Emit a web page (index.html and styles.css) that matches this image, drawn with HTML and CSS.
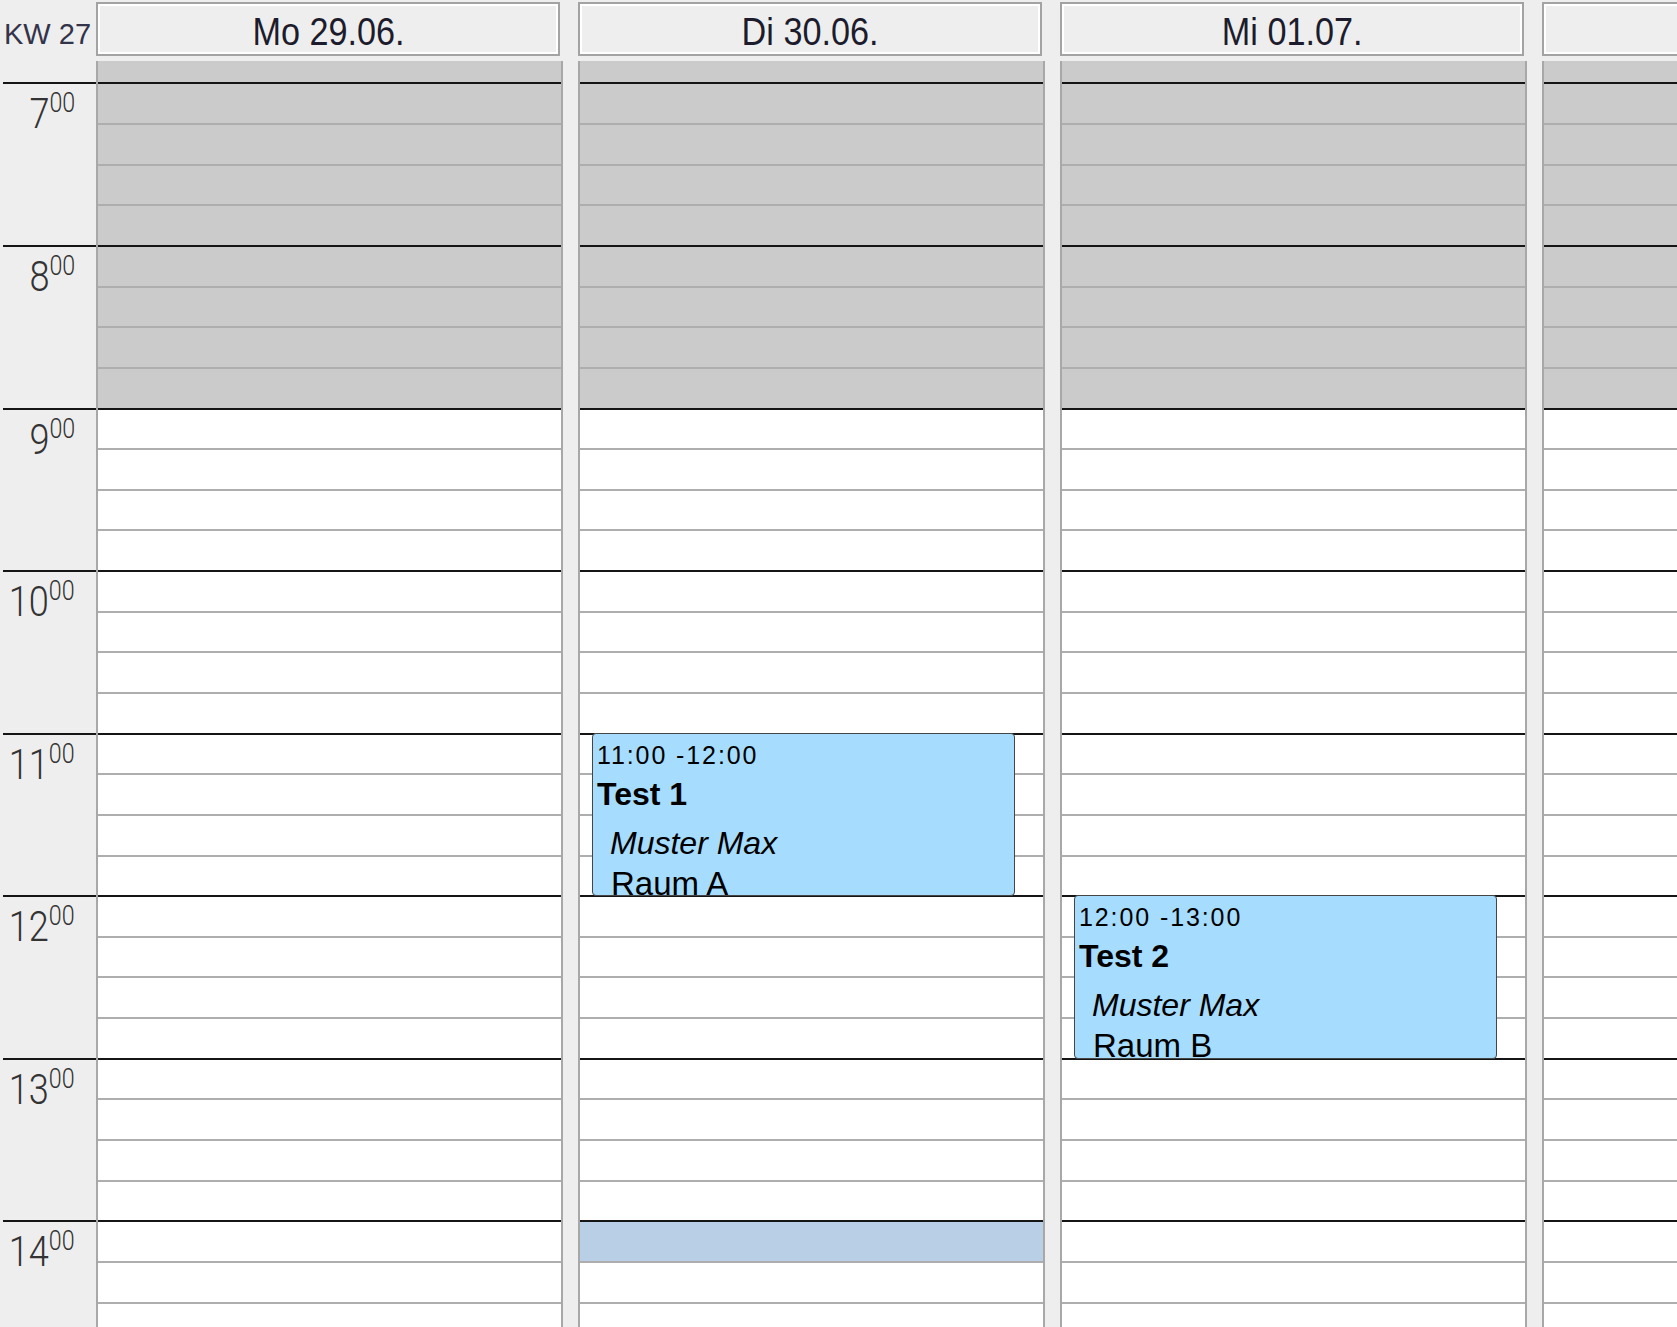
FILE: index.html
```html
<!DOCTYPE html>
<html lang="de">
<head>
<meta charset="utf-8">
<title>Kalender KW 27</title>
<link rel="stylesheet" href="styles.css">
</head>
<body>
<div class="cal">
  <div class="timecol">
    <div class="corner">KW 27</div>
    <div class="tpre"></div>
    <div class="thour"><span class="lbl">7<span class="mn">00</span></span></div>
    <div class="thour"><span class="lbl">8<span class="mn">00</span></span></div>
    <div class="thour"><span class="lbl">9<span class="mn">00</span></span></div>
    <div class="thour"><span class="lbl">10<span class="mn">00</span></span></div>
    <div class="thour"><span class="lbl">11<span class="mn">00</span></span></div>
    <div class="thour"><span class="lbl">12<span class="mn">00</span></span></div>
    <div class="thour"><span class="lbl">13<span class="mn">00</span></span></div>
    <div class="thour"><span class="lbl">14<span class="mn">00</span></span></div>
  </div>

  <div class="day">
    <div class="dhead"><div class="hbox"><span>Mo 29.06.</span></div></div>
    <div class="body">
      <div class="slot pre off"></div>
      <div class="slot h off"></div><div class="slot off"></div><div class="slot off"></div><div class="slot off"></div>
      <div class="slot h off"></div><div class="slot off"></div><div class="slot off"></div><div class="slot off"></div>
      <div class="slot h"></div><div class="slot"></div><div class="slot"></div><div class="slot"></div>
      <div class="slot h"></div><div class="slot"></div><div class="slot"></div><div class="slot"></div>
      <div class="slot h"></div><div class="slot"></div><div class="slot"></div><div class="slot"></div>
      <div class="slot h"></div><div class="slot"></div><div class="slot"></div><div class="slot"></div>
      <div class="slot h"></div><div class="slot"></div><div class="slot"></div><div class="slot"></div>
      <div class="slot h"></div><div class="slot"></div><div class="slot"></div><div class="slot"></div>
    </div>
  </div>

  <div class="day">
    <div class="dhead"><div class="hbox"><span>Di 30.06.</span></div></div>
    <div class="body">
      <div class="slot pre off"></div>
      <div class="slot h off"></div><div class="slot off"></div><div class="slot off"></div><div class="slot off"></div>
      <div class="slot h off"></div><div class="slot off"></div><div class="slot off"></div><div class="slot off"></div>
      <div class="slot h"></div><div class="slot"></div><div class="slot"></div><div class="slot"></div>
      <div class="slot h"></div><div class="slot"></div><div class="slot"></div><div class="slot"></div>
      <div class="slot h"></div><div class="slot"></div><div class="slot"></div><div class="slot"></div>
      <div class="slot h"></div><div class="slot"></div><div class="slot"></div><div class="slot"></div>
      <div class="slot h"></div><div class="slot"></div><div class="slot"></div><div class="slot"></div>
      <div class="slot h sel"></div><div class="slot"></div><div class="slot"></div><div class="slot"></div>
      <div class="ev ev11">
        <div class="t">11:00 -12:00</div>
        <div class="n">Test 1</div>
        <div class="p">Muster Max</div>
        <div class="r">Raum A</div>
      </div>
    </div>
  </div>

  <div class="day">
    <div class="dhead"><div class="hbox"><span>Mi 01.07.</span></div></div>
    <div class="body">
      <div class="slot pre off"></div>
      <div class="slot h off"></div><div class="slot off"></div><div class="slot off"></div><div class="slot off"></div>
      <div class="slot h off"></div><div class="slot off"></div><div class="slot off"></div><div class="slot off"></div>
      <div class="slot h"></div><div class="slot"></div><div class="slot"></div><div class="slot"></div>
      <div class="slot h"></div><div class="slot"></div><div class="slot"></div><div class="slot"></div>
      <div class="slot h"></div><div class="slot"></div><div class="slot"></div><div class="slot"></div>
      <div class="slot h"></div><div class="slot"></div><div class="slot"></div><div class="slot"></div>
      <div class="slot h"></div><div class="slot"></div><div class="slot"></div><div class="slot"></div>
      <div class="slot h"></div><div class="slot"></div><div class="slot"></div><div class="slot"></div>
      <div class="ev ev12">
        <div class="t">12:00 -13:00</div>
        <div class="n">Test 2</div>
        <div class="p">Muster Max</div>
        <div class="r">Raum B</div>
      </div>
    </div>
  </div>

  <div class="day">
    <div class="dhead"><div class="hbox"><span>Do 02.07.</span></div></div>
    <div class="body">
      <div class="slot pre off"></div>
      <div class="slot h off"></div><div class="slot off"></div><div class="slot off"></div><div class="slot off"></div>
      <div class="slot h off"></div><div class="slot off"></div><div class="slot off"></div><div class="slot off"></div>
      <div class="slot h"></div><div class="slot"></div><div class="slot"></div><div class="slot"></div>
      <div class="slot h"></div><div class="slot"></div><div class="slot"></div><div class="slot"></div>
      <div class="slot h"></div><div class="slot"></div><div class="slot"></div><div class="slot"></div>
      <div class="slot h"></div><div class="slot"></div><div class="slot"></div><div class="slot"></div>
      <div class="slot h"></div><div class="slot"></div><div class="slot"></div><div class="slot"></div>
      <div class="slot h"></div><div class="slot"></div><div class="slot"></div><div class="slot"></div>
    </div>
  </div>
</div>
</body>
</html>
```

FILE: styles.css
```css
* { box-sizing: border-box; }

html, body {
  margin: 0;
  padding: 0;
}

body {
  width: 1677px;
  height: 1327px;
  overflow: hidden;
  background: #eeeeee;
  font-family: "Liberation Sans", Arial, sans-serif;
}

.cal {
  display: flex;
  width: 1677px;
  height: 1327px;
  overflow: hidden;
  background: #eeeeee;
}

/* time column */
.timecol {
  flex: 0 0 96px;
  width: 96px;
  min-width: 0;
}

.corner {
  height: 61px;
  padding: 18px 0 0 4px;
  font-size: 29px;
  line-height: 33px;
  color: #33334a;
  white-space: nowrap;
}

.tpre {
  height: 21.4px;
}

.thour {
  display: flex;
  justify-content: flex-end;
  align-items: flex-start;
  height: 162.57px;
  margin-left: 3px;
  border-top: 2px solid #151515;
  padding: 9px 21px 0 0;
}

.lbl {
  display: inline-block;
  flex: none;
  font-family: Roboto, "Liberation Sans", sans-serif;
  font-weight: 300;
  font-size: 42px;
  line-height: 42px;
  color: #333333;
  white-space: nowrap;
  transform: scaleX(0.86);
  transform-origin: right center;
}

.mn {
  font-size: 27px;
  line-height: 0;
  vertical-align: 16px;
}

/* day columns */
.day {
  flex: 0 0 482px;
  min-width: 0;
  display: flex;
  flex-direction: column;
}

.dhead {
  height: 61px;
  padding-top: 2px;
}

.hbox {
  width: 464px;
  height: 54px;
  border: 2px solid #a3a3a3;
  box-shadow: inset 0 0 0 2px #ffffff;
  background: #eeeeee;
  text-align: center;
  padding-top: 8px;
  font-size: 38px;
  line-height: 40px;
  color: #1c1c2c;
  white-space: nowrap;
  overflow: hidden;
}

.hbox span {
  display: inline-block;
  transform: scaleX(0.9);
}

.body {
  position: relative;
  width: 467px;
  flex: 1;
  border-left: 2px solid #a8a8a8;
  border-right: 2px solid #a8a8a8;
  background: #ffffff;
  overflow: hidden;
}

.slot {
  height: 40.643px;
  border-top: 2px solid #aeaeae;
}

.slot.h {
  border-top-color: #151515;
}

.slot.pre {
  height: 21.4px;
  border-top: 0;
}

.off {
  background: #cbcbcb;
}

.sel {
  background: #b8cfe6;
}

/* events */
.ev {
  position: absolute;
  left: 12px;
  width: 423px;
  height: 163.5px;
  background: #a6dcfd;
  border: 1px solid #454545;
  border-radius: 4px;
  overflow: hidden;
  padding: 6px 0 0 4px;
  color: #000000;
  white-space: nowrap;
}

.ev11 { top: 671.7px; }
.ev12 { top: 834.3px; }

.ev .t {
  font-size: 25px;
  line-height: 30px;
  letter-spacing: 1.9px;
}

.ev .n {
  font-size: 32px;
  font-weight: bold;
  line-height: 48px;
}

.ev .p {
  font-size: 32px;
  font-style: italic;
  line-height: 50px;
  padding-left: 13px;
}

.ev .r {
  font-size: 33px;
  line-height: 32px;
  padding-left: 14px;
}
```
